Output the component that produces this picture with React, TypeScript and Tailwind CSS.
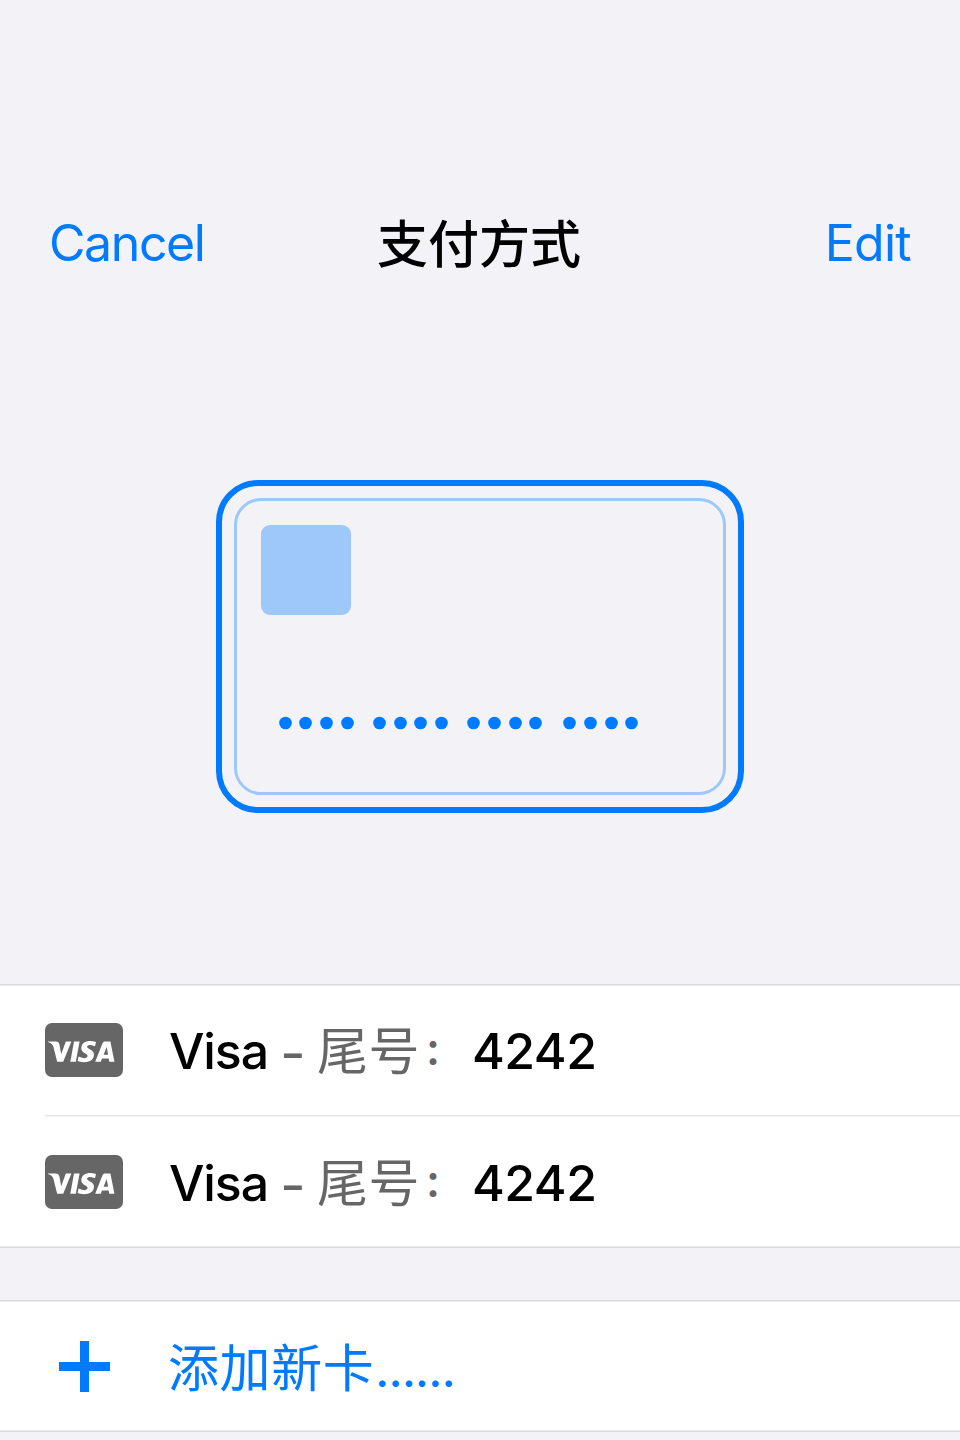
const blue = "text-[#007aff]";

function Visa() {
  return (
    <svg className="block h-[54px] w-[78px] shrink-0" viewBox="0 0 78 54">
      <rect width="78" height="54" rx="7" fill="#666" />
      <g fill="#fff">
        <path d="M3 18.4H10.8Q13.8 18.4 14.4 21.5L16.2 31.2L20.8 18.4H26.4L18.2 38.8H12.2L8.3 23.6Q7.2 20 3 19Z" />
        <path d="M29 18.4H34.6L30.8 38.8H25.3Z" />
        <path d="M51 19L50 23.2Q42.3 20.6 42 23.8C42 26.4 49.2 26.5 49 31.8C48.7 39.5 38.8 40.4 32.6 38L33.6 33.6Q41.6 36.8 42.6 33.3C43.2 30.4 36 30.3 36.3 25C36.8 17.6 45 16.8 51 19Z" />
        <path fillRule="evenodd" d="M59.2 18.4H65.4L69.4 38.8H64.3L63.7 35.6H57L55.8 38.8H50.2L57.4 20.5Q58.1 18.6 59.2 18.4ZM61.7 24L58.6 31.8H63.1Z" />
      </g>
    </svg>
  );
}

function CardRow() {
  return (
    <div className="flex h-[130px] items-center pl-[45px]">
      <Visa />
      <div className="mb-[6px] ml-[46px] flex h-[70px] items-baseline whitespace-pre text-[50px] leading-[70px]">
        <span className="w-[111px] font-medium tracking-[-1.1px]">Visa</span>
        <span className="relative top-[4px] w-[37px] text-[56px] leading-[0px] text-[#666]">-</span>
        <span className="relative top-px w-[103px] font-['Noto_Sans_CJK_SC',sans-serif] text-[51px] tracking-[0.5px] text-[#666]">尾号</span>
        <span className="relative -top-[4px] w-[52px] pl-[4px] font-['Noto_Sans_CJK_SC',sans-serif] text-[36px] leading-[0px] font-bold text-[#666]">：</span>
        <span className="font-medium tracking-[-0.5px]">4242</span>
      </div>
    </div>
  );
}

const dots = [285.5, 305.5, 326.5, 347.5, 379.5, 400.5, 420.5, 441.5, 473.5, 494.5, 515.5, 535.5, 569.5, 590.5, 611.5, 631.5];

export default function App() {
  return (
    <main className="flex h-[1440px] w-[960px] flex-col overflow-hidden bg-[#f2f2f7] font-['Inter','Noto_Sans_CJK_SC',sans-serif] text-black">
      <header className="mt-[200px] grid h-[88px] grid-cols-3 items-center px-[48px] text-[50px]">
        <button className={`pb-px pl-px text-left tracking-[-1.4px] ${blue}`}>Cancel</button>
        <h1 className="pb-[6px] pr-[2px] text-center font-['Noto_Sans_CJK_SC',sans-serif] text-[51px] font-medium">支付方式</h1>
        <button className={`pr-px pb-px text-right tracking-[-0.7px] ${blue}`}>Edit</button>
      </header>
      <svg className="ml-[216px] mt-[192px] block h-[333px] w-[528px] shrink-0" viewBox="216 480 528 333">
        <rect x="219" y="483" width="522" height="327" rx="39" fill="none" stroke="#007aff" strokeWidth="6" />
        <rect x="235.5" y="499.5" width="489" height="294" rx="25.5" fill="none" stroke="#9ec8fa" strokeWidth="3" />
        <rect x="261" y="525" width="90" height="90" rx="9" fill="#9ec8fa" />
        {dots.map((x) => <circle key={x} cx={x} cy="723" r="6.3" fill="#007aff" />)}
      </svg>
      <section className="mt-[171px] h-[264px] shrink-0 border-y border-[#d8d8dd] bg-white shadow-[inset_0_1px_#ececef,inset_0_-1px_#ececef]">
        <CardRow />
        <div className="ml-[45px] h-[2px] border-t border-[#e5e5e8] bg-[#f4f4f5]" />
        <CardRow />
      </section>
      <section className="mt-[52px] flex h-[132px] shrink-0 items-center border-y border-[#d8d8dd] bg-white pl-[59px] text-[51px] text-[#007aff] shadow-[inset_0_1px_#ececef,inset_0_-1px_#ececef]">
        <svg className="block h-[51px] w-[51px]" viewBox="0 0 51 51"><path d="M21 0h9v21h21v9H30v21h-9V30H0v-9h21Z" fill="currentColor" /></svg>
        <span className="ml-[58px] flex items-baseline pt-[6px] tracking-[0.6px]">
          <span>添加新卡</span>
          <span className="ml-px text-[42px] font-semibold tracking-[-0.3px]">……</span>
        </span>
      </section>
    </main>
  );
}
